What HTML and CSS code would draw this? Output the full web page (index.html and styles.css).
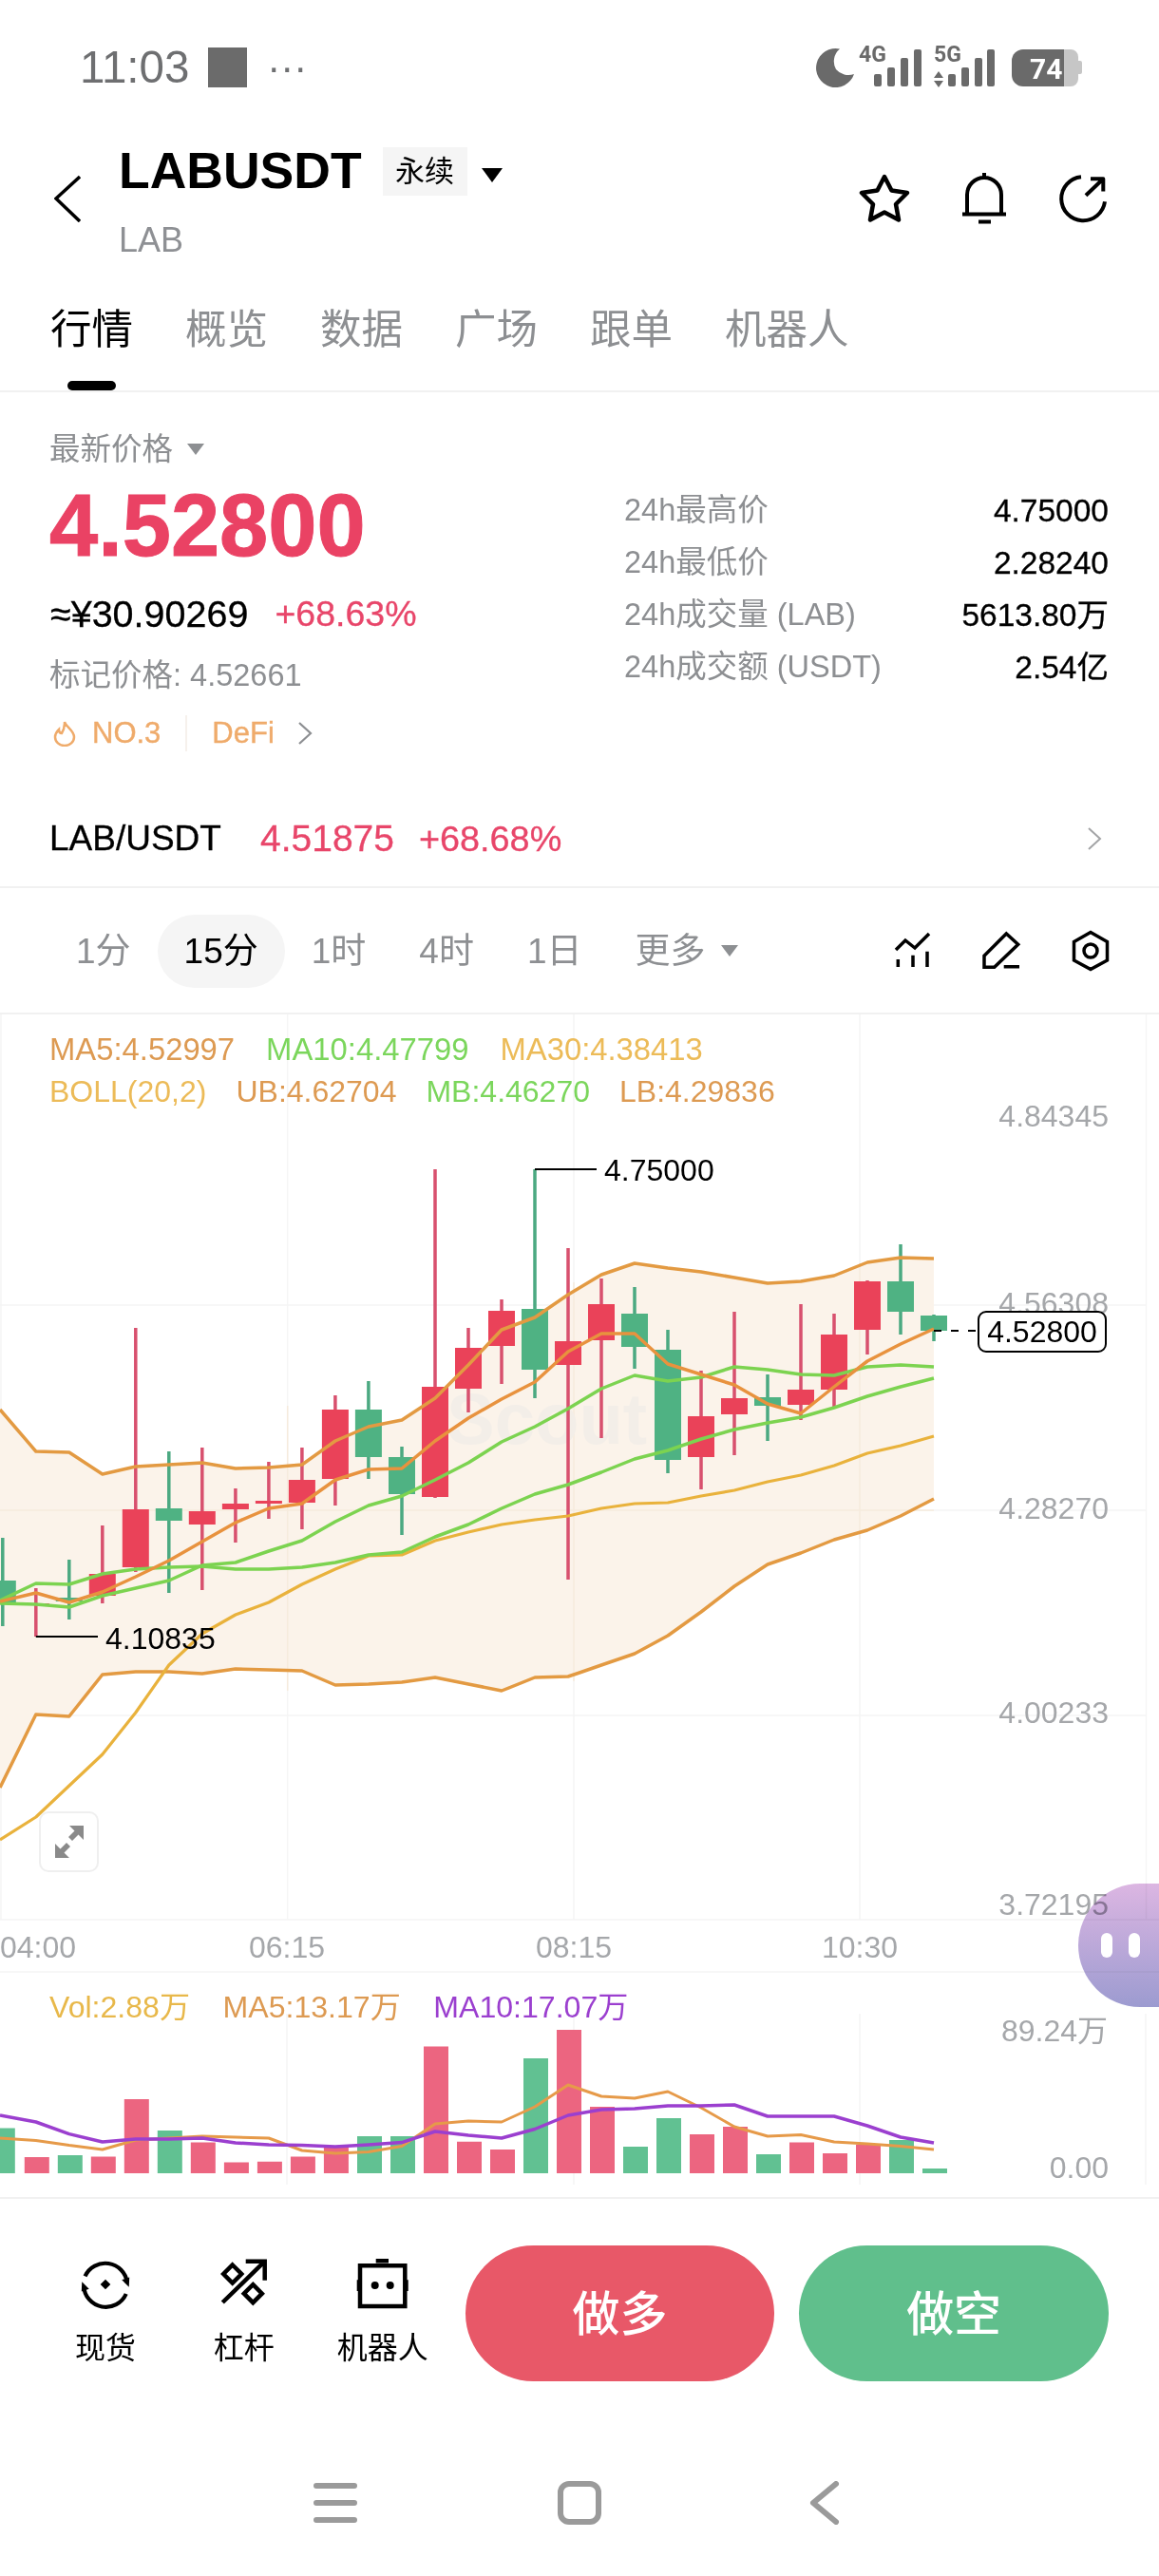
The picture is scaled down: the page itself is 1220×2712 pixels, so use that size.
FILE: index.html
```html
<!DOCTYPE html>
<html lang="zh-CN">
<head>
<meta charset="utf-8">
<title>LABUSDT</title>
<link rel="stylesheet" href="styles.css">
</head>
<body>
<div class="page">
  <div class="statusbar">
    <span class="clock">11:03</span>
    <span class="status-square"></span>
    <span class="status-dots">···</span>
    <svg class="status-icons" viewBox="855 35 290 70" width="290" height="70">
      <path class="st" d="M884 50.500A20.500 20.500 0 1 0 899 77A17 17 0 0 1 880 72A17 17 0 0 1 884 50.500Z"/>
      <text class="st-net" x="904" y="64">4G</text>
      <text class="st-net" x="983" y="64">5G</text>
      <path class="st" d="M920 79a2 2 0 0 1 2-2h4a2 2 0 0 1 2 2v9a2 2 0 0 1-2 2h-4a2 2 0 0 1-2-2zM934 72a2 2 0 0 1 2-2h4a2 2 0 0 1 2 2v16a2 2 0 0 1-2 2h-4a2 2 0 0 1-2-2zM948 62a2 2 0 0 1 2-2h4a2 2 0 0 1 2 2v26a2 2 0 0 1-2 2h-4a2 2 0 0 1-2-2zM962 53a2 2 0 0 1 2-2h4a2 2 0 0 1 2 2v35a2 2 0 0 1-2 2h-4a2 2 0 0 1-2-2z"/>
      <path class="st" d="M988 74l5 7h-10zM988 91l5-7h-10zM998 79a2 2 0 0 1 2-2h4a2 2 0 0 1 2 2v9a2 2 0 0 1-2 2h-4a2 2 0 0 1-2-2zM1012 72a2 2 0 0 1 2-2h4a2 2 0 0 1 2 2v16a2 2 0 0 1-2 2h-4a2 2 0 0 1-2-2zM1026 62a2 2 0 0 1 2-2h4a2 2 0 0 1 2 2v26a2 2 0 0 1-2 2h-4a2 2 0 0 1-2-2zM1039 53a2 2 0 0 1 2-2h4a2 2 0 0 1 2 2v35a2 2 0 0 1-2 2h-4a2 2 0 0 1-2-2z"/>
      <path class="st-batt" d="M1120 51h7a8 8 0 0 1 8 8v23a8 8 0 0 1-8 8h-7zM1135 63h2a2 2 0 0 1 2 2v10a2 2 0 0 1-2 2h-2z"/>
      <path class="st" d="M1077 51h43v39h-43a12 12 0 0 1-12-12v-15a12 12 0 0 1 12-12z"/>
      <text class="st-level" x="1084" y="81.500">74</text>
    </svg>
  </div>

  <header class="nav">
    <svg class="back" viewBox="0 0 28 50" width="28" height="50"><path d="M27 2L2 25L27 49"/></svg>
    <div class="nav-title">
      <div class="symbol-row">
        <h1 class="symbol">LABUSDT</h1>
        <span class="tag">永续</span>
        <span class="caret-black"></span>
      </div>
      <div class="base">LAB</div>
    </div>
    <div class="nav-actions">
      <svg class="ic-star" viewBox="0 0 54 52" width="54" height="52"><path d="M27 3L34.500 17.500L51 20L39 32L42 48.500L27 40.500L12 48.500L15 32L3 20L19.500 17.500Z"/></svg>
      <svg class="ic-bell" viewBox="0 0 46 54" width="46" height="54"><path d="M23 0V6M5 43V23a18 18 0 0 1 36 0V43M0 43.500H46M17 51.500H30"/></svg>
      <svg class="ic-share" viewBox="0 0 52 50" width="52" height="50"><path d="M24 2.300A23 23 0 1 0 49 28.300M29 21.700L47.300 4.300M34 4.300H47.300V17.600"/></svg>
    </div>
  </header>

  <nav class="tabs">
    <span class="tab tab-active">行情</span>
    <span class="tab">概览</span>
    <span class="tab">数据</span>
    <span class="tab">广场</span>
    <span class="tab">跟单</span>
    <span class="tab">机器人</span>
  </nav>

  <section class="summary">
    <div class="summary-left">
      <div class="latest"><span>最新价格</span><span class="caret-grey"></span></div>
      <div class="price">4.52800</div>
      <div class="fiat"><span class="fiat-value">≈¥30.90269</span><span class="up-text">+68.63%</span></div>
      <div class="mark">标记价格: 4.52661</div>
      <div class="hot">
        <svg class="flame" viewBox="0 0 24 28" width="24" height="28"><path d="M12 2c1 5 10 9 10 16a10 9 0 0 1-20 0c0-4 2-6 4-8c0 2 1 4 3 4c2-3 3-7 3-12z"/></svg>
        <span>NO.3</span>
        <span class="hot-div"></span>
        <span>DeFi</span>
        <svg class="small-chev" viewBox="0 0 16 24" width="16" height="24"><path d="M2 1L14 12L2 23"/></svg>
      </div>
    </div>
    <dl class="stats">
      <div class="stat"><dt>24h最高价</dt><dd>4.75000</dd></div>
      <div class="stat"><dt>24h最低价</dt><dd>2.28240</dd></div>
      <div class="stat"><dt>24h成交量 (LAB)</dt><dd>5613.80万</dd></div>
      <div class="stat"><dt>24h成交额 (USDT)</dt><dd>2.54亿</dd></div>
    </dl>
  </section>

  <div class="pair">
    <span class="pair-name">LAB/USDT</span>
    <span class="up-text">4.51875</span>
    <span class="up-text pair-change">+68.68%</span>
    <svg class="pair-chev" viewBox="0 0 16 24" width="16" height="24"><path d="M2 1L14 12L2 23"/></svg>
  </div>

  <div class="periods">
    <span class="period">1分</span>
    <span class="period period-active">15分</span>
    <span class="period">1时</span>
    <span class="period">4时</span>
    <span class="period">1日</span>
    <span class="period">更多</span>
    <span class="caret-grey caret-more"></span>
    <div class="period-tools">
      <svg viewBox="0 0 36 36" width="36" height="36"><path d="M0 17L10 7L20 15L35 0M2.300 27V35M18 22.700V35M33 18.700V35"/></svg>
      <svg viewBox="0 0 38 38" width="38" height="38"><path d="M1 24.300L24.300 1L36.700 12.300L11.700 36.300H1ZM21.700 35.700H38"/></svg>
      <svg viewBox="0 0 38 42" width="38" height="42"><path d="M19 1.500L36.500 11.500V31L19 40.500L1.500 31V11.500Z"/><circle cx="19" cy="21" r="7"/></svg>
    </div>
  </div>

  <section class="chart">
    <svg class="chart-svg" viewBox="0 1068 1220 1245" width="1220" height="1245">
      <path class="grid" d="M1 1068V2021M302.700 1068V2021M604 1068V2021M905 1068V2021M1206.500 1068V2021M0 1374H1206M0 1590H1206M0 1806H1206M0 2021H1220M0 2076H1220M302 2120V2300M604 2120V2300M905 2120V2300M1206 2120V2300"/>
      <polygon class="band" points="0,1484 37.800,1528 72.800,1529 107.800,1552 142.800,1544 177.800,1542 212.800,1540 247.900,1546 282.900,1545 317.900,1542 352.900,1517 387.900,1502 423,1495 458,1472 493,1437 528,1400 563,1387 598,1363 633,1342 668,1330 703,1335 738,1339 773,1345 808,1351 843,1349 878,1343 913,1329 948,1324 983,1325 983,1578 948,1596 913,1611 878,1621 843,1635 808,1647 773,1670 738,1697 703,1722 668,1741 633,1753 610,1761 598,1765 563,1766 528,1780 493,1773 458,1766 423,1771 387.900,1773 352.900,1774 317.900,1759 282.900,1758 247.900,1757 212.800,1762 177.800,1760 142.800,1760 107.800,1763 72.800,1807 37.800,1805 0,1882"/>
      <path class="grid-soft" d="M0 1590H983M302.700 1480V1780M604 1350V1770M905 1330V1620"/>
      <text class="watermark" x="470" y="1520">Scout</text>

      <path class="wick-red" d="M37.800 1672V1723M107.800 1606V1688M142.800 1398V1655M212.800 1524V1674M247.900 1567V1624M282.900 1539V1599M317.900 1524V1610M352.900 1469V1585M458 1231V1577M493 1398V1487M528 1368V1457M598 1314V1663M633 1346V1514M738 1443V1568M773 1381V1532M843 1373V1495M878 1383V1481M913 1348V1426"/>
      <path class="wick-green" d="M2.800 1619V1712M72.800 1642V1705M177.800 1528V1677M387.900 1454V1557M423 1523V1616M563 1231V1472M668 1355V1441M703 1400V1551M808 1447V1517M948 1310V1405M983 1384V1412"/>
      <path class="body-red" d="M23.800 1688h28v2h-28zM93.800 1657h28v23h-28zM128.800 1589h28v61h-28zM198.800 1591h28v14h-28zM233.900 1583h28v6h-28zM268.900 1580h28v3h-28zM303.900 1558h28v24h-28zM338.900 1484h28v73h-28zM444 1460h28v116h-28zM479 1419h28v43h-28zM514 1380h28v37h-28zM584 1412h28v25h-28zM619 1373h28v38h-28zM724 1491h28v43h-28zM759 1472h28v17h-28zM829 1463h28v16h-28zM864 1405h28v58h-28zM899 1349h28v51h-28z"/>
      <path class="body-green" d="M-11.200 1664h28v23h-28zM58.800 1682h28v4h-28zM163.800 1588h28v13h-28zM373.900 1484h28v50h-28zM409 1534h28v39h-28zM549 1378h28v64h-28zM654 1383h28v35h-28zM689 1421h28v116h-28zM794 1471h28v9h-28zM934 1349h28v32h-28zM969 1385h28v16h-28z"/>

      <polyline class="ln-boll" points="0,1484 37.800,1528 72.800,1529 107.800,1552 142.800,1544 177.800,1542 212.800,1540 247.900,1546 282.900,1545 317.900,1542 352.900,1517 387.900,1502 423,1495 458,1472 493,1437 528,1400 563,1387 598,1363 633,1342 668,1330 703,1335 738,1339 773,1345 808,1351 843,1349 878,1343 913,1329 948,1324 983,1325"/>
      <polyline class="ln-boll" points="0,1882 37.800,1805 72.800,1807 107.800,1763 142.800,1760 177.800,1760 212.800,1762 247.900,1757 282.900,1758 317.900,1759 352.900,1774 387.900,1773 423,1771 458,1766 493,1773 528,1780 563,1766 598,1765 610,1761 633,1753 668,1741 703,1722 738,1697 773,1670 808,1647 843,1635 878,1621 913,1611 948,1596 983,1578"/>
      <polyline class="ln-ma30" points="0,1937 37.800,1913 72.800,1880 107.800,1847 142.800,1803 177.800,1753 212.800,1720 247.900,1700 282.900,1687 317.900,1668 352.900,1652 387.900,1638 423,1637 458,1622 493,1613 528,1605 563,1600 598,1596 633,1588 668,1583 703,1582 738,1575 773,1569 808,1560 843,1553 878,1543 913,1530 948,1522 983,1512"/>
      <polyline class="ln-green" points="0,1685 37.800,1667 72.800,1668 107.800,1657 142.800,1652 177.800,1650 212.800,1649 247.900,1652 282.900,1652 317.900,1650 352.900,1645 387.900,1637 423,1634 458,1618 493,1605 528,1588 563,1573 598,1563 633,1550 668,1536 703,1527 738,1515 773,1505 808,1498 843,1492 878,1482 913,1470 948,1460 983,1451"/>
      <polyline class="ln-green" points="0,1688 37.800,1689 72.800,1692 107.800,1680 142.800,1672 177.800,1664 212.800,1648 247.900,1645 282.900,1633 317.900,1622 352.900,1602 387.900,1585 423,1575 458,1558 493,1540 528,1518 563,1502 598,1483 633,1462 668,1448 703,1454 738,1450 773,1439 808,1442 843,1447 878,1448 913,1439 948,1437 983,1439"/>
      <polyline class="ln-ma5" points="0,1686 37.800,1677 72.800,1687 107.800,1676 142.800,1660 177.800,1643 212.800,1623 247.900,1603 282.900,1588 317.900,1583 352.900,1558 387.900,1547 423,1546 458,1517 493,1493 528,1473 563,1455 598,1423 633,1404 668,1404 703,1436 738,1447 773,1458 808,1478 843,1488 878,1460 913,1433 948,1415 983,1399"/>

      <path class="callout" d="M563 1231H628M37.800 1723H103"/>
      <path class="dash" d="M983 1401H1030"/>
      <text class="ct-black" x="636" y="1243">4.75000</text>
      <text class="ct-black" x="111" y="1736">4.10835</text>

      <text class="axis" x="1167" y="1186">4.84345</text>
      <text class="axis" x="1167" y="1383">4.56308</text>
      <text class="axis" x="1167" y="1599">4.28270</text>
      <text class="axis" x="1167" y="1814">4.00233</text>
      <text class="axis" x="1167" y="2016">3.72195</text>
      <rect class="last-box" x="1030" y="1381" width="134" height="42" rx="8"/>
      <text class="ct-black ct-mid" x="1097" y="1413">4.52800</text>

      <text class="axis axis-x-start" x="0" y="2061">04:00</text>
      <text class="axis axis-x" x="302" y="2061">06:15</text>
      <text class="axis axis-x" x="604" y="2061">08:15</text>
      <text class="axis axis-x" x="905" y="2061">10:30</text>

      <text class="axis" x="1166" y="2149">89.24万</text>
      <text class="axis" x="1167" y="2293">0.00</text>

      <path class="vol-red" d="M25.800 2288V2271h26V2288zM95.800 2288V2270.600h26V2288zM130.800 2288V2210h26V2288zM200.800 2288V2255.600h26V2288zM235.900 2288V2276.600h26V2288zM270.900 2288V2275.700h26V2288zM305.900 2288V2270.600h26V2288zM340.900 2288V2260.700h26V2288zM446 2288V2154.400h26V2288zM481 2288V2254.700h26V2288zM516 2288V2263h26V2288zM586 2288V2137h26V2288zM621 2288V2218h26V2288zM726 2288V2247h26V2288zM761 2288V2239h26V2288zM831 2288V2255.600h26V2288zM866 2288V2267h26V2288zM901 2288V2258h26V2288z"/>
      <path class="vol-green" d="M-10.200 2288V2240.600h26V2288zM60.800 2288V2269h26V2288zM165.800 2288V2243h26V2288zM376 2288V2249h26V2288zM411 2288V2249h26V2288zM551 2288V2167h26V2288zM656 2288V2260h26V2288zM691 2288V2230h26V2288zM796 2288V2268h26V2288zM936 2288V2253h26V2288zM971 2288V2283h26V2288z"/>
      <polyline class="ln-vol5" points="0,2251 37.800,2253.400 72.800,2258.600 107.800,2263 142.800,2253 177.800,2251 212.800,2249 247.900,2250 282.900,2251 317.900,2264 352.900,2267 387.900,2265.500 423,2259.500 458,2236 493,2233 528,2234 563,2218 598,2195 633,2207 668,2209 703,2202 738,2219 773,2239 808,2249 843,2247.500 878,2255 913,2257 948,2259.500 983,2263"/>
      <polyline class="ln-vol10" points="0,2227 37.800,2234 72.800,2246.600 107.800,2255 142.800,2252 177.800,2252 212.800,2251 247.900,2256 282.900,2258 317.900,2258.600 352.900,2260 387.900,2258 423,2255.600 458,2244 493,2248 528,2251 563,2241.500 598,2227 633,2221 668,2220 703,2217 738,2217 773,2216 808,2228 843,2228 878,2228 913,2238 948,2250 983,2256"/>
    </svg>

    <div class="legend">
      <div class="legend-row">
        <span class="c-ma5">MA5:4.52997</span>
        <span class="c-green">MA10:4.47799</span>
        <span class="c-yellow">MA30:4.38413</span>
      </div>
      <div class="legend-row legend-boll">
        <span class="c-yellow">BOLL(20,2)</span>
        <span class="c-ma5">UB:4.62704</span>
        <span class="c-green">MB:4.46270</span>
        <span class="c-ma5">LB:4.29836</span>
      </div>
    </div>

    <div class="vol-legend">
      <span class="c-vol">Vol:2.88万</span>
      <span class="c-ma5">MA5:13.17万</span>
      <span class="c-purple">MA10:17.07万</span>
    </div>

    <div class="expand">
      <svg viewBox="0 0 32 36" width="32" height="36"><path d="M31 1v15l-5.500-5.500L19 17l-4-4 6.500-6.500L16 1zM1 35V20l5.500 5.500L13 19l4 4-6.500 6.500L16 35z"/></svg>
    </div>

    <div class="floater"><span class="eye"></span><span class="eye"></span></div>
  </section>

  <section class="actions">
    <div class="tool">
      <svg class="tool-icon" viewBox="0 0 60 60" width="60" height="56"><path class="tl" d="M7 20.700A25 25 0 0 1 54.500 28M53.300 40.700A25 25 0 0 1 5.500 32"/><path d="M56.500 33L48.500 25L57 22ZM3.500 27L11.500 35L3 38ZM30 24.300L35.700 30L30 35.700L24.300 30Z"/></svg>
      <span class="tool-label">现货</span>
    </div>
    <div class="tool">
      <svg class="tool-icon" viewBox="0 0 50 52" width="50" height="56"><path class="tl" d="M2.300 45L46.700 1.700M26.700 1.700H46.700V21.700M12.700 5.500L22.200 15L12.700 24.500L3.200 15ZM34.300 26.200L43.800 35.700L34.300 45.200L24.800 35.700Z"/></svg>
      <span class="tool-label">杠杆</span>
    </div>
    <div class="tool">
      <svg class="tool-icon" viewBox="0 0 58 56" width="58" height="56"><path class="tl" d="M21.700 3.300H35M5 8.300H52.300V51H5Z"/><path d="M1.700 23.300H4.500V35H1.700ZM52.700 23.300H55.700V35H52.700Z"/><circle cx="20.700" cy="29" r="4"/><circle cx="36.700" cy="29" r="4"/></svg>
      <span class="tool-label">机器人</span>
    </div>
    <button class="trade trade-long">做多</button>
    <button class="trade trade-short">做空</button>
  </section>

  <footer class="sysnav">
    <span class="sys"><svg viewBox="0 0 46 46" width="46" height="46"><path d="M3 5H43M3 23H43M3 41H43"/></svg></span>
    <span class="sys"><svg viewBox="0 0 46 46" width="46" height="46"><rect x="3" y="3" width="40" height="40" rx="9"/></svg></span>
    <span class="sys"><svg viewBox="0 0 34 46" width="34" height="46"><path d="M30 3L6 23L30 43"/></svg></span>
  </footer>
</div>
</body>
</html>
```

FILE: styles.css
```css
* { box-sizing: border-box; }

html, body {
  margin: 0;
  padding: 0;
  background: #fff;
}

body {
  font-family: "Liberation Sans", "Noto Sans CJK SC", sans-serif;
  color: #000;
}

.page {
  position: relative;
  width: 1220px;
  height: 2712px;
  overflow: hidden;
  background: #fff;
}

/* status bar */
.statusbar {
  height: 142px;
  display: flex;
  align-items: center;
  padding-left: 84px;
  color: #6e6f71;
}
.clock { font-size: 47.5px; line-height: 50px; }
.status-square {
  width: 41px;
  height: 42px;
  margin-left: 20px;
  background: #6b6b6b;
}
.status-dots {
  margin-left: 21px;
  width: 38px;
  font-size: 42px;
  line-height: 34px;
}
.status-icons {
  margin-left: auto;
  margin-right: 75px;
}
.st { fill: #6a6a6a; }
.st-batt { fill: #c6c6c6; }
.st-net { font: bold 23px Roboto, sans-serif; fill: #6a6a6a; }
.st-level { font: bold 30px Roboto, sans-serif; fill: #fff; }

/* nav */
.nav {
  height: 136px;
  display: flex;
  padding-left: 57px;
  padding-right: 54px;
  align-items: flex-start;
}
.back {
  margin-top: 42px;
  fill: none;
  stroke: #000;
  stroke-width: 3.5;
}
.nav-title { margin-left: 40px; margin-top: 8px; }
.symbol-row { display: flex; align-items: center; height: 60px; }
.symbol {
  margin: 0;
  font-size: 53.5px;
  line-height: 60px;
  font-weight: bold;
}
.tag {
  margin-left: 22px;
  width: 89px;
  height: 51px;
  background: #f5f5f5;
  font-size: 31px;
  line-height: 51px;
  text-align: center;
}
.caret-black {
  margin-left: 15px;
  margin-top: 8px;
  width: 0;
  height: 0;
  border-left: 11px solid transparent;
  border-right: 11px solid transparent;
  border-top: 15px solid #000;
}
.base {
  margin-top: 21px;
  font-size: 36px;
  line-height: 44px;
  color: #8e9094;
}
.nav-actions {
  margin-left: auto;
  display: flex;
  align-items: center;
  gap: 55px;
  margin-top: 40px;
}
.ic-star, .ic-bell, .ic-share {
  fill: none;
  stroke: #000;
  stroke-width: 4.5;
  stroke-linejoin: round;
}
.ic-share { stroke-width: 4; overflow: visible; }
.ic-bell { stroke-width: 4; }

/* tabs */
.tabs {
  height: 135px;
  display: flex;
  gap: 55px;
  padding: 39px 0 0 53px;
  border-bottom: 2px solid #f1f1f1;
}
.tab {
  position: relative;
  font-size: 43.5px;
  line-height: 60px;
  height: 60px;
  color: #8d8f92;
}
.tab-active { color: #000; }
.tab-active::after {
  content: "";
  position: absolute;
  left: 18px;
  top: 84px;
  width: 51px;
  height: 10px;
  border-radius: 5px;
  background: #000;
}

/* summary */
.summary {
  height: 417px;
  display: flex;
  justify-content: space-between;
  padding: 0 53px 0 52px;
}
.summary-left { padding-top: 40px; }
.latest {
  display: flex;
  align-items: center;
  height: 40px;
  font-size: 32.5px;
  line-height: 40px;
  color: #8d8f92;
}
.caret-grey {
  margin-left: 15px;
  width: 0;
  height: 0;
  border-left: 9px solid transparent;
  border-right: 9px solid transparent;
  border-top: 12px solid #8d8f92;
}
.price {
  margin-top: 10px;
  font-size: 92px;
  line-height: 100px;
  font-weight: bold;
  color: #ea4264;
  -webkit-text-stroke: 1px #ea4264;
}
.fiat {
  margin-top: 18px;
  display: flex;
  gap: 28px;
  font-size: 37.5px;
  line-height: 50px;
  -webkit-text-stroke: 0.3px currentColor;
}
.fiat-value { font-size: 39.5px; margin-left: 1px; }
.up-text { color: #e8466a; }
.mark {
  margin-top: 20px;
  font-size: 32.5px;
  line-height: 40px;
  color: #8d8f92;
}
.hot {
  margin-top: 21px;
  display: flex;
  align-items: center;
  height: 40px;
  font-size: 31px;
  line-height: 40px;
  color: #efab6b;
  -webkit-text-stroke: 0.4px #efab6b;
}
.flame {
  margin-left: 4px;
  margin-right: 17px;
  fill: none;
  stroke: #efab6b;
  stroke-width: 2.5;
}
.hot-div {
  width: 2px;
  height: 38px;
  margin: 0 26px 0 26px;
  background: #f6f1ec;
}
.small-chev {
  margin-left: 24px;
  fill: none;
  stroke: #8d8f92;
  stroke-width: 2.2;
}
.stats {
  margin: 0;
  padding-top: 97px;
  width: 510px;
}
.stat {
  display: flex;
  justify-content: space-between;
  height: 55px;
  font-size: 32.5px;
  line-height: 55px;
}
.stat dt { color: #8d8f92; }
.stat dd { margin: 0; font-size: 33.5px; -webkit-text-stroke: 0.3px #000; }

/* pair row */
.pair {
  height: 105px;
  display: flex;
  align-items: center;
  padding: 3px 60px 0 52px;
  font-size: 39px;
  border-bottom: 2px solid #f1f1f1;
  -webkit-text-stroke: 0.3px currentColor;
}
.pair-name { width: 222px; font-size: 37px; }
.pair-change { margin-left: 26px; font-size: 37.8px; }
.pair-chev {
  margin-left: auto;
  fill: none;
  stroke: #a3a4a6;
  stroke-width: 2;
}

/* periods */
.periods {
  height: 133px;
  display: flex;
  align-items: center;
  padding-left: 52px;
  padding-right: 53px;
  padding-top: 1px;
  border-bottom: 2px solid #f1f1f1;
}
.period {
  height: 77px;
  padding: 0 28px;
  border-radius: 38.5px;
  font-size: 37px;
  line-height: 77px;
  color: #8d8f92;
}
.period-active {
  background: #f5f5f5;
  color: #000;
}
.caret-more { margin-left: -11px; }
.period-tools {
  margin-left: auto;
  display: flex;
  align-items: center;
  gap: 56px;
}
.period-tools svg {
  fill: none;
  stroke: #000;
  stroke-width: 3.5;
  overflow: visible;
}

/* chart */
.chart {
  position: relative;
  height: 1247px;
  border-bottom: 2px solid #f1f1f1;
}
.chart-svg { display: block; }
.grid { fill: none; stroke: #f5f5f5; stroke-width: 1.5; }
.grid-soft { fill: none; stroke: #f6ebdd; stroke-width: 1.5; }
.band { fill: #fbf3ea; }
.watermark {
  font: bold 76px "Liberation Sans", sans-serif;
  fill: #f3eee8;
}
.wick-red { fill: none; stroke: #d8506e; stroke-width: 3.5; }
.wick-green { fill: none; stroke: #4ba981; stroke-width: 3.5; }
.body-red { fill: #ea4259; }
.body-green { fill: #4fb283; }
.ln-boll { fill: none; stroke: #e39a42; stroke-width: 3.5; stroke-linejoin: round; }
.ln-ma5 { fill: none; stroke: #e8923e; stroke-width: 3.5; stroke-linejoin: round; }
.ln-ma30 { fill: none; stroke: #e9b23c; stroke-width: 3.2; stroke-linejoin: round; }
.ln-green { fill: none; stroke: #7cd350; stroke-width: 3.5; stroke-linejoin: round; }
.callout { fill: none; stroke: #000; stroke-width: 2; }
.dash { fill: none; stroke: #000; stroke-width: 2; stroke-dasharray: 8 10; }
.ct-black {
  font: 32px "Liberation Sans", sans-serif;
  fill: #000;
}
.ct-mid { text-anchor: middle; }
.axis {
  font: 32px "Liberation Sans", "Noto Sans CJK SC", sans-serif;
  fill: #a5a7aa;
  text-anchor: end;
}
.axis-x { text-anchor: middle; }
.axis-x-start { text-anchor: start; }
.last-box { fill: #fff; stroke: #000; stroke-width: 2; }
.vol-red { fill: #ec6580; }
.vol-green { fill: #61c192; }
.ln-vol5 { fill: none; stroke: #e69a49; stroke-width: 3; stroke-linejoin: round; }
.ln-vol10 { fill: none; stroke: #9b3fcf; stroke-width: 3.5; stroke-linejoin: round; }

.legend {
  position: absolute;
  left: 52px;
  top: 15px;
  font-size: 32.8px;
  line-height: 44px;
}
.legend-row { display: flex; gap: 33px; }
.legend-boll { gap: 31px; font-size: 32px; }
.vol-legend {
  position: absolute;
  left: 52px;
  top: 1024px;
  display: flex;
  gap: 34.5px;
  font-size: 32.1px;
  line-height: 42px;
}
.c-ma5 { color: #dd9a52; }
.c-green { color: #7bd65c; }
.c-yellow { color: #ecbb58; }
.c-vol { color: #e8b84a; }
.c-purple { color: #9b3fcf; }

.expand {
  position: absolute;
  left: 41px;
  top: 839px;
  width: 63px;
  height: 64px;
  display: flex;
  align-items: center;
  justify-content: center;
  border: 2px solid #efefef;
  border-radius: 10px;
  background: #fff;
}
.expand svg { fill: #8a8a8a; }

.floater {
  position: absolute;
  right: 0;
  top: 915px;
  width: 85px;
  height: 130px;
  padding-left: 24px;
  display: flex;
  align-items: center;
  gap: 17px;
  border-radius: 65px 0 0 65px;
  background: linear-gradient(180deg, #dcb6e2 0%, #9c9bd0 100%);
  mix-blend-mode: multiply;
}
.eye {
  width: 12px;
  height: 26px;
  border-radius: 6px;
  background: #fff;
}

/* actions */
.actions {
  height: 193px;
  display: flex;
  align-items: flex-start;
  padding: 49px 53px 0 38px;
}
.tool {
  width: 146px;
  padding-top: 13px;
  display: flex;
  flex-direction: column;
  align-items: center;
}
.tool-icon { display: block; fill: #000; }
.tl { fill: none; stroke: #000; stroke-width: 4.5; }
.tool-label {
  margin-top: 19px;
  font-size: 32px;
  line-height: 40px;
}
.trade {
  width: 326px;
  height: 143px;
  border: 0;
  border-radius: 71.5px;
  font: 500 50px "Liberation Sans", "Noto Sans CJK SC", sans-serif;
  color: #fff;
  padding: 0 0 8px;
}
.trade-long { margin-left: 14px; background: #e85868; }
.trade-short { margin-left: 26px; background: #60bf8c; }

/* system nav */
.sysnav {
  display: flex;
  justify-content: center;
  padding-top: 104px;
}
.sys {
  width: 257px;
  height: 46px;
  display: flex;
  justify-content: center;
}
.sys svg {
  fill: none;
  stroke: #9a9a9a;
  stroke-width: 6;
  stroke-linecap: round;
  stroke-linejoin: round;
}
```
